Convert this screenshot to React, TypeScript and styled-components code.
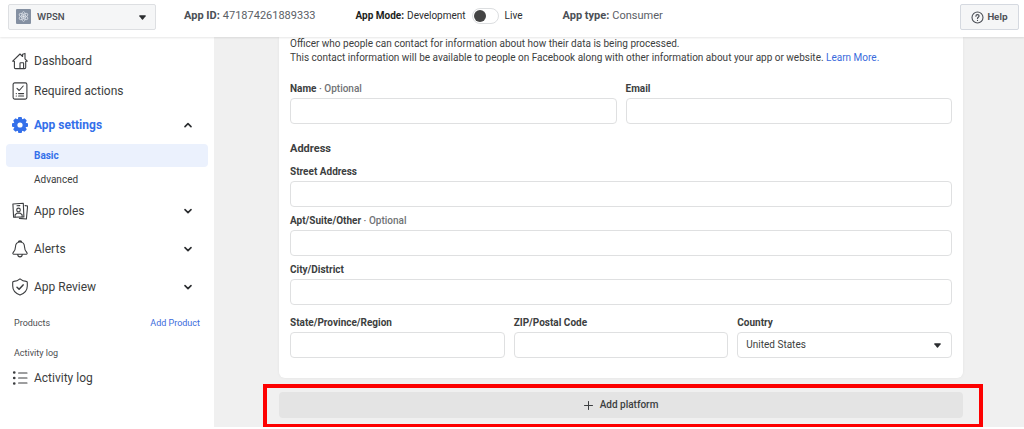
import React from 'react';
import styled, { createGlobalStyle } from 'styled-components';

const GlobalStyle = createGlobalStyle`
  *, *::before, *::after { box-sizing: border-box; }
  body {
    margin: 0;
    background: #fff;
    color: #3c3e40;
    font-family: Roboto, "Liberation Sans", sans-serif;
    font-size: 10px;
    line-height: 14px;
  }
  button, input, select { font: inherit; color: inherit; }
  a { color: #3a6bdc; text-decoration: none; }
`;

const Header = styled.header`
  position: relative;
  z-index: 1;
  display: flex;
  align-items: flex-start;
  height: 37px;
  padding: 4px 5px 0 8px;
  background: #fff;
  box-shadow: 0 1px 2px rgba(0, 0, 0, 0.1);
`;

const AppPicker = styled.div`
  position: relative;
  flex: none;
  width: 148px;
  height: 26px;
`;

const AppPickerSelect = styled.select`
  appearance: none;
  width: 100%;
  height: 100%;
  padding: 0 24px 0 28px;
  border: 1px solid #dddfe2;
  border-radius: 2px;
  background: #f5f6f7;
  color: #4b4f56;
  font-family: Inter, sans-serif;
  font-size: 9px;
  font-weight: 600;
`;

const AppLogo = styled.svg`
  position: absolute;
  left: 8px;
  top: 5px;
`;

const Caret = styled.svg<{ $right: number }>`
  position: absolute;
  right: ${(p) => p.$right}px;
  top: 50%;
  margin-top: -2px;
  pointer-events: none;
`;

const HeaderInfo = styled.div`
  display: flex;
  align-items: center;
  gap: 40px;
  height: 24px;
  margin-left: 28px;
  white-space: nowrap;
`;

const InfoItem = styled.span<{ $dark?: boolean }>`
  display: flex;
  align-items: center;
  font-size: ${(p) => (p.$dark ? 10 : 11)}px;
  color: ${(p) => (p.$dark ? '#2b2d30' : '#5a5e65')};
  b { margin-right: 3px; font-weight: 700; color: ${(p) => (p.$dark ? '#1c1e21' : '#4b4f56')}; }
`;

const Switch = styled.input`
  appearance: none;
  display: flex;
  align-items: center;
  width: 27px;
  height: 16px;
  margin: 0 6px;
  padding: 1px;
  border: 1px solid #dcdee0;
  border-radius: 8px;
  background: #fff;
  &::before {
    content: "";
    width: 12px;
    height: 12px;
    border-radius: 50%;
    background: #444;
  }
  &:checked { justify-content: flex-end; }
`;

const HelpButton = styled.button`
  display: flex;
  align-items: center;
  justify-content: center;
  gap: 3px;
  width: 59px;
  height: 26px;
  margin-left: auto;
  padding: 0;
  border: 1px solid #d5d9e0;
  border-radius: 2px;
  background: #f5f6f7;
  color: #4b4f56;
  font-family: Inter, sans-serif;
  font-size: 9px;
  font-weight: 700;
`;

const Body = styled.div`
  display: grid;
  grid-template-columns: 214px minmax(0, 1fr);
`;

const Sidebar = styled.nav`
  padding: 9px 6px 0;
  background: #fff;
`;

const NavRow = styled.a<{ $size: 'plain' | 'group' | 'compact'; $active?: boolean }>`
  display: flex;
  align-items: center;
  gap: 6px;
  height: ${(p) => ({ plain: 30, group: 38, compact: 24 })[p.$size]}px;
  padding: 0 16px 0 6px;
  color: ${(p) => (p.$active ? '#3470ea' : '#3c3e40')};
  font-size: 12px;
  font-weight: ${(p) => (p.$active ? 700 : 400)};
  > svg { flex: none; }
  > svg:last-child:not(:first-child) { margin-left: auto; color: #2b2d30; }
`;

const SubNav = styled.div`
  display: grid;
  gap: 1px;
  padding-bottom: 1px;
`;

const SubRow = styled.a<{ $active?: boolean }>`
  display: flex;
  align-items: center;
  height: 23px;
  padding-left: 28px;
  border-radius: 4px;
  background: ${(p) => (p.$active ? '#ebf1fd' : 'transparent')};
  color: ${(p) => (p.$active ? '#3470ea' : '#3c3e40')};
  font-weight: ${(p) => (p.$active ? 700 : 400)};
`;

const NavSection = styled.section`
  padding: 7px 0 3px;
`;

const SectionTitle = styled.div`
  display: flex;
  align-items: center;
  justify-content: space-between;
  height: 20px;
  padding: 0 8px;
  font-size: 9px;
  color: #4b4d50;
`;

const Main = styled.main`
  padding: 0 61px 9px 65px;
  background: #f0f0f0;
`;

const Card = styled.form`
  padding: 0 11px 20px;
  border-radius: 0 0 6px 6px;
  background: #fff;
  box-shadow: 0 0 3px rgba(0, 0, 0, 0.06);
`;

const Intro = styled.p`
  margin: 0 0 17px;
`;

const Heading = styled.h2`
  margin: 17px 0 8px;
  font-size: 11px;
  line-height: 16px;
  font-weight: 700;
`;

const Fields = styled.div<{ $columns: number }>`
  display: grid;
  grid-template-columns: repeat(${(p) => p.$columns}, minmax(0, 1fr));
  gap: 9px;
`;

const Stack = styled.div`
  display: grid;
  gap: 7px;
  margin-bottom: 11px;
`;

const Field = styled.label`
  display: grid;
  gap: 2px;
  font-weight: 700;
  small { font-size: 10px; font-weight: 500; color: #707275; }
`;

const TextBox = styled.input`
  width: 100%;
  height: 26px;
  padding: 0 8px;
  border: 1px solid #dfe0e1;
  border-radius: 4px;
  background: #fff;
  font-weight: 400;
`;

const SelectWrap = styled.span`
  position: relative;
  display: block;
`;

const SelectBox = styled(TextBox).attrs({ as: 'select' })`
  appearance: none;
  display: block;
`;

const PlatformRow = styled.div`
  position: relative;
  margin-top: 14px;
`;

const PlatformButton = styled.button`
  display: flex;
  align-items: center;
  justify-content: center;
  gap: 7px;
  width: 100%;
  height: 26px;
  padding: 0;
  border: 0;
  border-radius: 4px;
  background: #e4e4e4;
  font-weight: 500;
`;

const Highlight = styled.div`
  position: absolute;
  inset: -8px -20px -10px -16px;
  border: 4px solid #fd0000;
  pointer-events: none;
`;

const Icon = ({ children }: { children: React.ReactNode }) => (
  <svg width="16" height="18" viewBox="0 0 16 18" fill="none" stroke="currentColor" strokeWidth="1.1" strokeLinecap="round" strokeLinejoin="round" aria-hidden="true">
    {children}
  </svg>
);

const HomeIcon = () => (
  <Icon>
    <path d="M.7 9.2 8 2l2.6 2.5V2.2l2.4-.8v5.4l2.3 2.4h-1.600v6.300c0 .7-.4 1.100-1.100 1.100H3.500c-.7 0-1.100-.4-1.100-1.100V9.200Z" />
    <path d="M8 16.400v-5.200c0-.3.2-.5.5-.5h2.600c.3 0 .5.2.5.5v5.200" />
  </Icon>
);

const TasksIcon = () => (
  <Icon>
    <rect x="1.1" y=".9" width="13.8" height="16.2" rx="1.6" />
    <path d="m5 6.4 2.2 2.1 4-4.5M6.6 11.6h5M6.6 14h5M4.2 11.6h.2M4.2 14h.2" />
  </Icon>
);

const GearIcon = () => (
  <svg width="16" height="18" viewBox="0 0 16 18" aria-hidden="true">
    <g fill="currentColor">
      {[0, 45, 90, 135].map((a) => (
        <rect key={a} x="6" y="1" width="4" height="16" rx="1" transform={`rotate(${a} 8 9)`} />
      ))}
      <circle cx="8" cy="9" r="6.4" />
    </g>
    <circle cx="8" cy="9" r="2.6" fill="#fff" />
  </svg>
);

const RolesIcon = () => (
  <Icon>
    <path d="M.9 2 11.3 1.2 11.9 14.9 1.6 15.3Z" />
    <path d="M13.1 3.6 15.6 4 14.4 17 7.4 16.4M3.1 15v-2.3l2-1.6h3l2 1.6v2M5 3.8l2.8-.2" />
    <circle cx="6.5" cy="7.9" r="1.8" />
  </Icon>
);

const BellIcon = () => (
  <Icon>
    <path d="M6.2 2.4C6.3 1.4 7 .9 8 .9s1.7.5 1.8 1.5M8 2c-3.1 0-4.5 2.2-4.500 4.800 0 3.200-.9 4.200-2.300 5.700-.7.8-.3 1.700.6 1.700h12.400c.9 0 1.300-.9.6-1.700-1.400-1.500-2.300-2.500-2.300-5.700C12.500 4.200 11.100 2 8 2ZM5.700 14.400c.1 1.500 1 2.500 2.300 2.500s2.200-1 2.300-2.500" />
  </Icon>
);

const ShieldIcon = () => (
  <Icon>
    <path d="M8 .9c1.800 1.500 4.100 2.400 6.300 2.500.6 0 1 .4 1 1v3.700c0 4.200-3 7.500-7.300 9-4.300-1.500-7.300-4.800-7.300-9V4.400c0-.6.4-1 1-1C3.900 3.300 6.200 2.400 8 .9Z" />
    <path d="m5 9.200 2.100 2 4-4.300" strokeWidth="1.5" />
  </Icon>
);

const ListIcon = () => (
  <Icon>
    <path d="M6.600 4H15M6.600 9H15M6.600 14H15" />
    <path d="M2.200 3.500h.1M2.200 9h.1M2.200 14.500h.1" strokeWidth="2.6" />
  </Icon>
);

const Chevron = ({ up }: { up?: boolean }) => (
  <svg width="8" height="8" viewBox="0 0 8 8" fill="none" stroke="currentColor" strokeWidth="1.6" strokeLinecap="round" strokeLinejoin="round" aria-hidden="true">
    <path d={up ? 'm1 5.600 3-3 3 3' : 'm1 2.600 3 3 3-3'} />
  </svg>
);

const DownCaret = ({ right }: { right: number }) => (
  <Caret $right={right} width="7" height="5" viewBox="0 0 7 5" aria-hidden="true">
    <path d="M.8.3h5.400c.5 0 .7.5.4.9L4 4.400c-.3.3-.7.3-1 0L.4 1.200C.1.800.300.3.800.3Z" fill="#2b2d30" />
  </Caret>
);

const TextField = ({ label, optional, type = 'text' }: { label: string; optional?: boolean; type?: string }) => (
  <Field>
    <span>
      {label}
      {optional && <small> · Optional</small>}
    </span>
    <TextBox type={type} />
  </Field>
);

export default function App() {
  return (
    <>
      <GlobalStyle />
      <Header>
        <AppPicker>
          <AppPickerSelect aria-label="App" defaultValue="WPSN">
            <option>WPSN</option>
          </AppPickerSelect>
          <AppLogo width="15" height="15" viewBox="0 0 15 15" aria-hidden="true">
            <rect width="15" height="15" rx="1" fill="#8490a2" />
            <g fill="none" stroke="#dde2e9" strokeWidth=".7">
              <ellipse cx="7.5" cy="7.5" rx="5" ry="2" transform="rotate(90 7.5 7.5)" />
              <ellipse cx="7.5" cy="7.5" rx="5" ry="2" transform="rotate(30 7.5 7.5)" />
              <ellipse cx="7.5" cy="7.5" rx="5" ry="2" transform="rotate(150 7.5 7.5)" />
            </g>
            <circle cx="7.5" cy="7.5" r="1.2" fill="#e3e7ed" />
          </AppLogo>
          <DownCaret right={10} />
        </AppPicker>
        <HeaderInfo>
          <InfoItem><b>App ID:</b>471874261889333</InfoItem>
          <InfoItem $dark>
            <b>App Mode:</b>Development
            <Switch type="checkbox" role="switch" aria-label="Live mode" />
            Live
          </InfoItem>
          <InfoItem><b>App type:</b>Consumer</InfoItem>
        </HeaderInfo>
        <HelpButton type="button">
          <svg width="13" height="13" viewBox="0 0 13 13" fill="none" stroke="currentColor" strokeWidth="1.1" strokeLinecap="round" aria-hidden="true">
            <circle cx="6.5" cy="6.5" r="5.5" />
            <path d="M4.900 5.200c0-1 .7-1.600 1.600-1.600s1.600.6 1.600 1.500c0 1.200-1.600 1.200-1.600 2.400M6.500 9.300v.1" strokeWidth="1.2" />
          </svg>
          Help
        </HelpButton>
      </Header>
      <Body>
        <Sidebar>
          <NavRow href="#dashboard" $size="plain"><HomeIcon />Dashboard</NavRow>
          <NavRow href="#required" $size="plain"><TasksIcon />Required actions</NavRow>
          <NavRow href="#settings" $size="group" $active><GearIcon />App settings<Chevron up /></NavRow>
          <SubNav>
            <SubRow href="#basic" $active>Basic</SubRow>
            <SubRow href="#advanced">Advanced</SubRow>
          </SubNav>
          <NavRow href="#roles" $size="group"><RolesIcon />App roles<Chevron /></NavRow>
          <NavRow href="#alerts" $size="group"><BellIcon />Alerts<Chevron /></NavRow>
          <NavRow href="#review" $size="group"><ShieldIcon />App Review<Chevron /></NavRow>
          <NavSection>
            <SectionTitle>Products<a href="#add-product">Add Product</a></SectionTitle>
          </NavSection>
          <NavSection>
            <SectionTitle>Activity log</SectionTitle>
          </NavSection>
          <NavRow href="#activity" $size="compact"><ListIcon />Activity log</NavRow>
        </Sidebar>
        <Main>
          <Card>
            <Intro>
              Officer who people can contact for information about how their data is being processed.
              <br />
              This contact information will be available to people on Facebook along with other information about your app or website. <a href="#learn">Learn More.</a>
            </Intro>
            <Fields $columns={2}>
              <TextField label="Name" optional />
              <TextField label="Email" type="email" />
            </Fields>
            <Heading>Address</Heading>
            <Stack>
              <TextField label="Street Address" />
              <TextField label="Apt/Suite/Other" optional />
              <TextField label="City/District" />
            </Stack>
            <Fields $columns={3}>
              <TextField label="State/Province/Region" />
              <TextField label="ZIP/Postal Code" />
              <Field>
                <span>Country</span>
                <SelectWrap>
                  <SelectBox defaultValue="United States">
                    <option>United States</option>
                  </SelectBox>
                  <DownCaret right={11} />
                </SelectWrap>
              </Field>
            </Fields>
          </Card>
          <PlatformRow>
            <PlatformButton type="button">
              <svg width="9" height="9" viewBox="0 0 9 9" stroke="currentColor" strokeLinecap="round" aria-hidden="true">
                <path d="M4.500.5v8M.5 4.500h8" />
              </svg>
              Add platform
            </PlatformButton>
            <Highlight />
          </PlatformRow>
        </Main>
      </Body>
    </>
  );
}
